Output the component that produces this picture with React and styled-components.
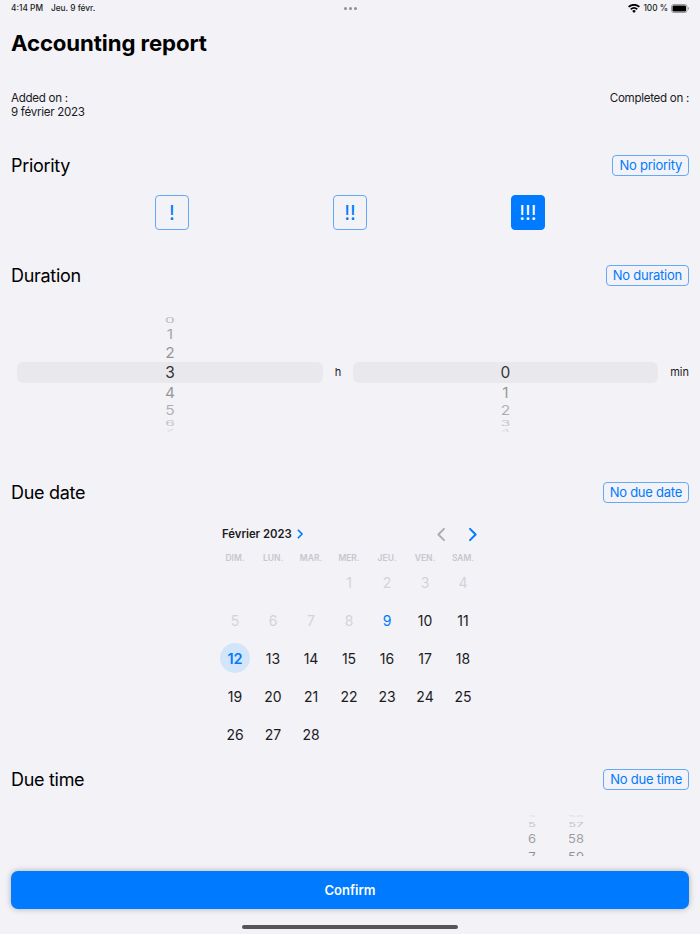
import React from 'react';
import styled, { createGlobalStyle } from 'styled-components';

const GlobalStyle = createGlobalStyle`
    html, body {
        margin: 0;
        padding: 0;
        background: #f2f2f7;
        font-family: "Inter", "Liberation Sans", sans-serif;
        color: #000000;
    }
`;

const BLUE = '#007aff';

// Rows of a wheel: value, height of the row, squash of the glyph, fade of the glyph
const hourWheel = [
    ['', 4, 0.2, 0.1],
    ['0', 10, 0.45, 0.25],
    ['1', 17, 0.8, 0.32],
    ['2', 19, 0.95, 0.38],
    ['3', 21, 1, 0.8],
    ['4', 20, 0.95, 0.38],
    ['5', 16, 0.8, 0.28],
    ['6', 10, 0.45, 0.2],
    ['7', 3, 0.2, 0.1],
];

const minuteWheel = [
    ['', 4, 1, 0],
    ['', 10, 1, 0],
    ['', 17, 1, 0],
    ['', 19, 1, 0],
    ['0', 21, 1, 0.8],
    ['1', 20, 0.95, 0.38],
    ['2', 16, 0.8, 0.28],
    ['3', 10, 0.45, 0.2],
    ['4', 3, 0.2, 0.1],
];

const timeHours = [
    ['4', 4, 0.2, 0.08],
    ['5', 12, 0.5, 0.2],
    ['6', 16, 0.9, 0.35],
    ['7', 22, 1, 0.4],
];

const timeMinutes = [
    ['56', 4, 0.2, 0.08],
    ['57', 12, 0.5, 0.2],
    ['58', 16, 0.9, 0.35],
    ['59', 22, 1, 0.4],
];

const weekDays = ['DIM.', 'LUN.', 'MAR.', 'MER.', 'JEU.', 'VEN.', 'SAM.'];

const Wheel = ({ items, small }) => (
    <WheelColumn $small={small}>
        {items.map(([value, height, squash, fade], i) => (
            <WheelItem key={i} $height={height} $selected={!small && i === 4}>
                <WheelGlyph $squash={squash} $fade={fade} $small={small}>{value}</WheelGlyph>
            </WheelItem>
        ))}
    </WheelColumn>
);

const SectionHead = ({ title, action, gap = 35 }) => (
    <HeadRow $gap={gap}>
        <SectionTitle>{title}</SectionTitle>
        <OutlineButton>{action}</OutlineButton>
    </HeadRow>
);

const Chevron = ({ size, left, color, weight }) => (
    <svg width={size} height={size} viewBox="0 0 12 12" fill="none">
        <path
            d={left ? 'M8 1.5 3.5 6 8 10.5' : 'M4 1.5 8.5 6 4 10.5'}
            stroke={color}
            strokeWidth={weight}
            strokeLinecap="round"
            strokeLinejoin="round"
        />
    </svg>
);

const App = () => {
    const days = [];
    for (let i = 0; i < 3; i++) days.push(null);
    for (let d = 1; d <= 28; d++) days.push(d);

    return (
        <Page>
            <GlobalStyle />
            <Scroll>
                <StatusBar>
                    <StatusGroup>
                        <span>4:14 PM</span>
                        <span>Jeu. 9 févr.</span>
                    </StatusGroup>
                    <Dots><i /><i /><i /></Dots>
                    <StatusRight>
                        <svg width="12" height="9" viewBox="0 0 12 9">
                            <path d="M6 9 4.2 6.9a2.7 2.7 0 0 1 3.6 0Z" fill="#000" />
                            <path d="M3.3 5.9 2.2 4.6a5.8 5.8 0 0 1 7.6 0L8.7 5.9a4.1 4.1 0 0 0-5.4 0Z" fill="#000" />
                            <path d="M1.3 3.6 0 2.2a9 9 0 0 1 12 0l-1.3 1.4a7.2 7.2 0 0 0-9.4 0Z" fill="#000" />
                        </svg>
                        <span>100 %</span>
                        <svg width="18" height="9" viewBox="0 0 18 9">
                            <rect x="0.5" y="0.5" width="15.5" height="8" rx="2.2" fill="none" stroke="#9a9a9e" />
                            <rect x="1.5" y="1.5" width="13.5" height="6" rx="1.2" fill="#000" />
                            <path d="M17 3v3c.6-.2 1-.8 1-1.5S17.600 3.200 17 3Z" fill="#9a9a9e" />
                        </svg>
                    </StatusRight>
                </StatusBar>

                <Title>Accounting report</Title>

                <MetaRow>
                    <MetaText>Added on :<br />9 février 2023</MetaText>
                    <MetaText>Completed on :</MetaText>
                </MetaRow>

                <SectionHead title="Priority" action="No priority" gap={36} />
                <PriorityRow>
                    <PriorityButton>!</PriorityButton>
                    <PriorityButton>!!</PriorityButton>
                    <PriorityButton $active>!!!</PriorityButton>
                </PriorityRow>

                <SectionHead title="Duration" action="No duration" />
                <DurationRow>
                    <Wheel items={hourWheel} />
                    <UnitLabel>h</UnitLabel>
                    <Wheel items={minuteWheel} />
                    <UnitLabel>min</UnitLabel>
                </DurationRow>

                <SectionHead title="Due date" action="No due date" />
                <Calendar>
                    <CalendarHead>
                        <MonthLabel>
                            Février 2023
                            <Chevron size={10} color={BLUE} weight={2} />
                        </MonthLabel>
                        <MonthNav>
                            <Chevron size={15} left color="#aeaeb2" weight={1.6} />
                            <Chevron size={15} color={BLUE} weight={1.6} />
                        </MonthNav>
                    </CalendarHead>
                    <WeekRow>
                        {weekDays.map((d) => <WeekDay key={d}>{d}</WeekDay>)}
                    </WeekRow>
                    <DayGrid>
                        {days.map((d, i) => (
                            <DayCell key={i}>
                                {d && (
                                    <Day $past={d < 9} $today={d === 9} $selected={d === 12}>{d}</Day>
                                )}
                            </DayCell>
                        ))}
                    </DayGrid>
                </Calendar>

                <SectionHead title="Due time" action="No due time" gap={16} />
                <TimeWheels>
                    <Wheel items={timeHours} small />
                    <Wheel items={timeMinutes} small />
                </TimeWheels>
            </Scroll>

            <Footer>
                <ConfirmButton>Confirm</ConfirmButton>
                <HomeBar />
            </Footer>
        </Page>
    );
};

const Page = styled.div`
    width: 700px;
    height: 934px;
    display: flex;
    flex-direction: column;
    overflow: hidden;
    background: #f2f2f7;
`;

const Scroll = styled.div`
    height: 856px;
    flex: none;
    overflow: hidden;
    padding: 0 11px;
    box-sizing: border-box;
`;

const StatusBar = styled.div`
    height: 16px;
    display: grid;
    grid-template-columns: 1fr auto 1fr;
    align-items: center;
    font-size: 8.3px;
    font-weight: 500;
    color: #1c1c1e;
`;

const StatusGroup = styled.div`
    display: flex;
    gap: 8px;
`;

const StatusRight = styled.div`
    display: flex;
    justify-content: flex-end;
    align-items: center;
    gap: 3px;
`;

const Dots = styled.div`
    display: flex;
    gap: 2px;
    i {
        width: 3px;
        height: 3px;
        border-radius: 50%;
        background: #8e8e93;
    }
`;

const Title = styled.h1`
    margin: 12px 0 0;
    font-size: 22.2px;
    line-height: 29px;
    font-weight: 700;
    letter-spacing: -0.1px;
`;

const MetaRow = styled.div`
    margin-top: 34px;
    display: flex;
    justify-content: space-between;
    align-items: flex-start;
`;

const MetaText = styled.div`
    font-size: 11.6px;
    line-height: 14px;
    letter-spacing: -0.3px;
    color: #1c1c1e;
`;

const HeadRow = styled.div`
    display: flex;
    justify-content: space-between;
    align-items: center;
    height: 21px;
    margin-top: ${(p) => p.$gap}px;
`;

const SectionTitle = styled.h2`
    margin: 0;
    font-size: 18px;
    font-weight: 400;
    line-height: 21px;
    letter-spacing: -0.3px;
`;

const OutlineButton = styled.button`
    height: 21px;
    padding: 0 6px;
    border: 1px solid #64a9fb;
    border-radius: 4px;
    background: transparent;
    color: ${BLUE};
    font-family: inherit;
    font-size: 13px;
    letter-spacing: -0.25px;
    line-height: 19px;
`;

const PriorityRow = styled.div`
    display: flex;
    justify-content: center;
    gap: 144px;
    margin-top: 19px;
    height: 35px;
`;

const PriorityButton = styled.button`
    width: 34px;
    height: 35px;
    padding: 0;
    border: 1px solid ${(p) => (p.$active ? BLUE : '#64a9fb')};
    border-radius: 4px;
    background: ${(p) => (p.$active ? BLUE : 'transparent')};
    color: ${(p) => (p.$active ? '#ffffff' : BLUE)};
    font-family: inherit;
    font-size: 20px;
    font-weight: 400;
`;

const DurationRow = styled.div`
    margin: 26px 0 50px;
    padding: 0 0 0 6px;
    display: grid;
    grid-template-columns: 306px 30px 305px 1fr;
    align-items: center;
    height: 120px;
`;

const WheelColumn = styled.div`
    display: flex;
    flex-direction: column;
    width: ${(p) => (p.$small ? '44px' : 'auto')};
`;

const WheelItem = styled.div`
    height: ${(p) => p.$height}px;
    display: flex;
    align-items: center;
    justify-content: center;
    border-radius: ${(p) => (p.$selected ? '6px' : '0')};
    background: ${(p) => (p.$selected ? '#e8e8ed' : 'transparent')};
    overflow: hidden;
    flex: none;
`;

const WheelGlyph = styled.span`
    display: block;
    font-size: ${(p) => (p.$small ? '13px' : '15.5px')};
    line-height: 1;
    color: #000000;
    opacity: ${(p) => p.$fade};
    transform: scaleY(${(p) => p.$squash});
`;

const UnitLabel = styled.div`
    font-size: 11px;
    color: #1c1c1e;
    text-align: center;
    &:last-child {
        text-align: right;
    }
`;

const Calendar = styled.div`
    width: 268px;
    margin: 21px auto 0;
`;

const CalendarHead = styled.div`
    display: flex;
    justify-content: space-between;
    align-items: center;
    height: 20px;
    padding: 0 4px 0 6px;
`;

const MonthLabel = styled.div`
    display: flex;
    align-items: center;
    gap: 3px;
    font-size: 11.3px;
    font-weight: 600;
    color: #1c1c1e;
`;

const MonthNav = styled.div`
    display: flex;
    gap: 16px;
`;

const WeekRow = styled.div`
    display: grid;
    grid-template-columns: repeat(7, 38px);
    margin-top: 8px;
    height: 11px;
`;

const WeekDay = styled.div`
    text-align: center;
    font-size: 8.5px;
    line-height: 12px;
    font-weight: 600;
    color: #c7c7cc;
`;

const DayGrid = styled.div`
    display: grid;
    grid-template-columns: repeat(7, 38px);
    grid-auto-rows: 38px;
`;

const DayCell = styled.div`
    display: flex;
    align-items: center;
    justify-content: center;
`;

const Day = styled.div`
    width: 30px;
    height: 30px;
    border-radius: 50%;
    display: flex;
    align-items: center;
    justify-content: center;
    font-size: ${(p) => (p.$selected ? '14.500px' : '14px')};
    font-weight: ${(p) => (p.$selected ? 600 : 400)};
    background: ${(p) => (p.$selected ? '#d3e5fb' : 'transparent')};
    color: ${(p) => {
        if (p.$past) return '#d4d4d6';
        if (p.$today || p.$selected) return BLUE;
        return '#1c1c1e';
    }};
`;

const TimeWheels = styled.div`
    display: flex;
    justify-content: flex-end;
    margin-top: 24px;
    padding-right: 91px;
`;

const Footer = styled.div`
    flex: 1;
    padding: 15px 11px 0;
    background: #f2f2f7;
    display: flex;
    flex-direction: column;
    align-items: center;
`;

const ConfirmButton = styled.button`
    width: 100%;
    height: 38px;
    flex: none;
    border: none;
    border-radius: 7px;
    background: ${BLUE};
    color: #ffffff;
    font-family: inherit;
    font-size: 13px;
    font-weight: 600;
    box-shadow: 0 0 6px rgba(0, 0, 0, 0.28);
`;

const HomeBar = styled.div`
    width: 216px;
    height: 4px;
    margin-top: 16px;
    border-radius: 2px;
    background: #55555a;
`;

export default App;
